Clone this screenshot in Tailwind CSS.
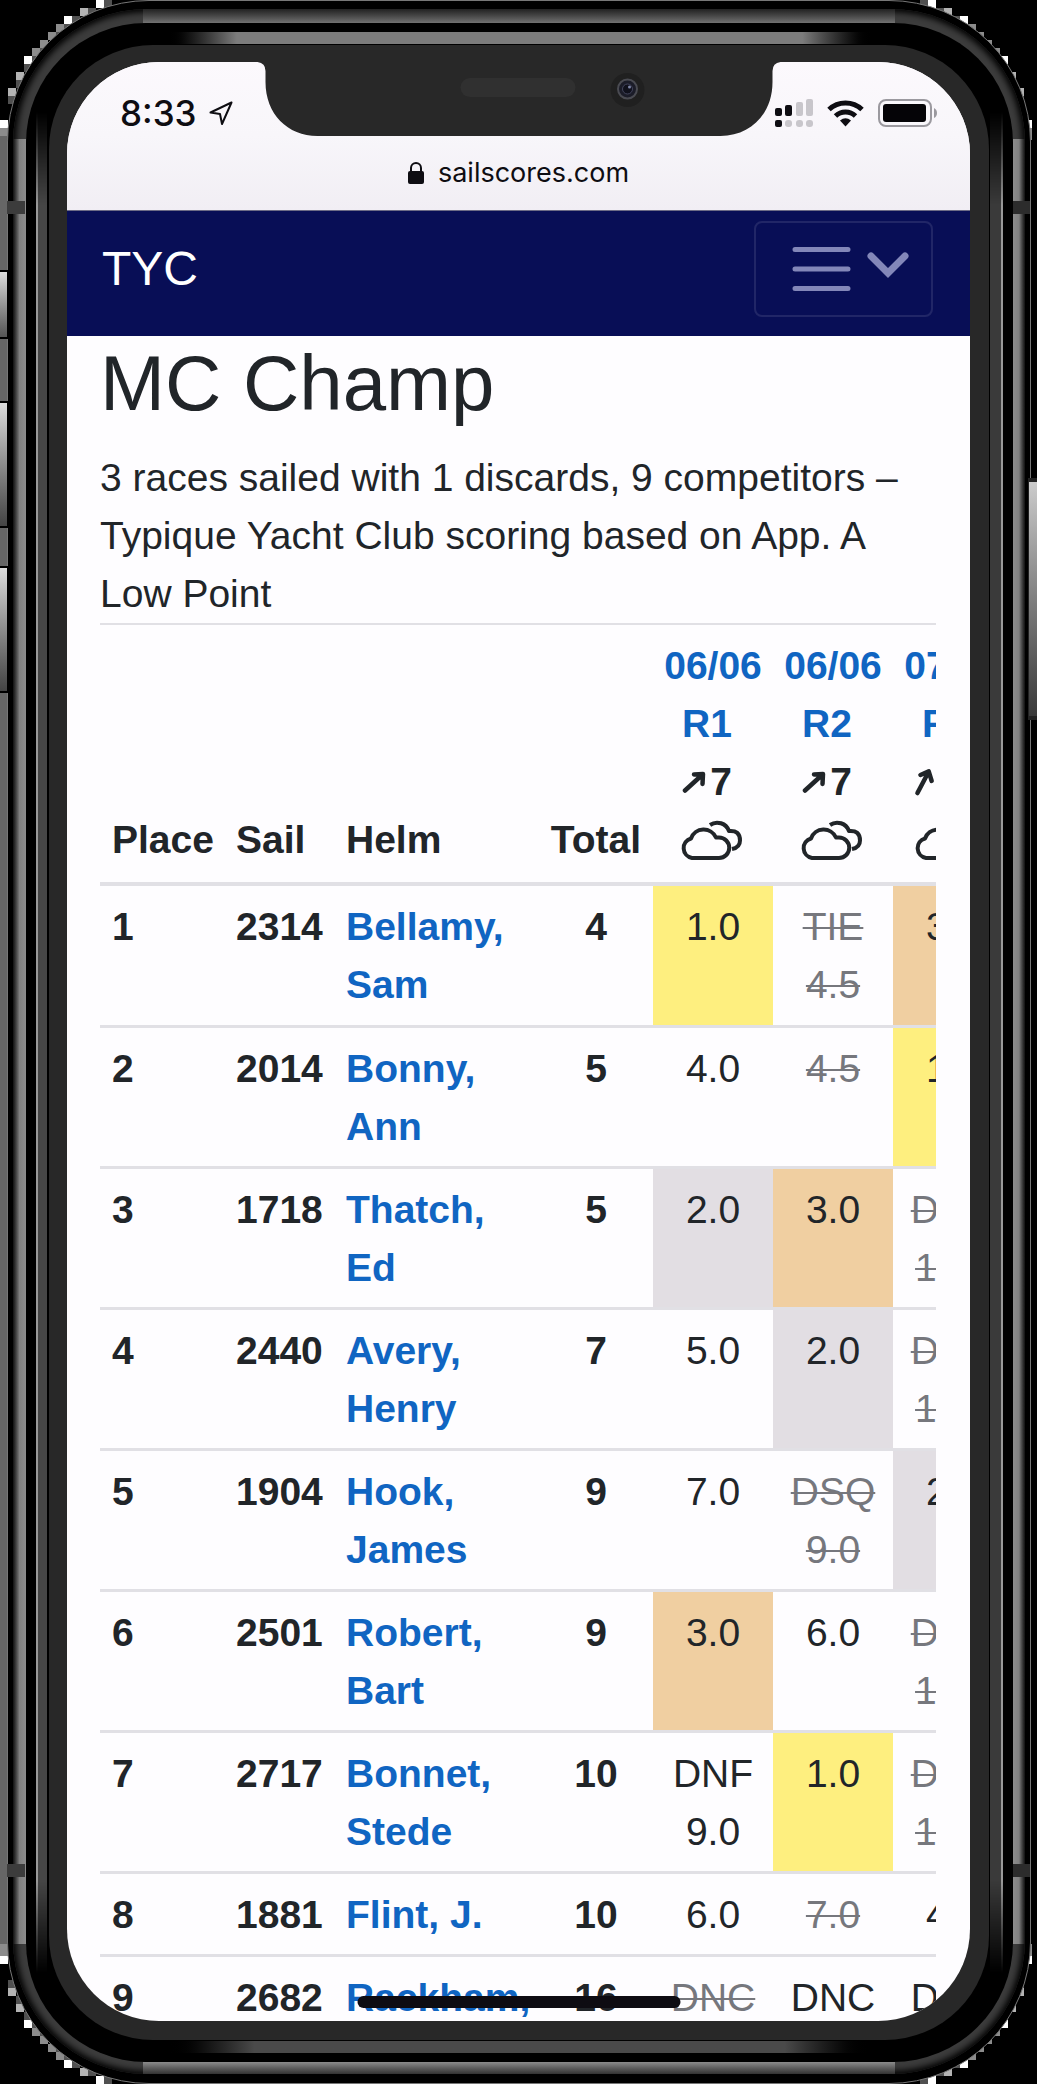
<!DOCTYPE html>
<html lang="en">
<head>
<meta charset="utf-8">
<title>MC Champ – SailScores</title>
<script src="https://cdn.jsdelivr.net/npm/@tailwindcss/browser@4"></script>
</head>
<body class="bg-black">
<svg width="0" height="0" class="absolute" aria-hidden="true">
  <defs>
    <symbol id="cloud" viewBox="0 0 62 42">
      <g fill="none" stroke="#212529" stroke-width="4" stroke-linecap="butt" stroke-linejoin="round">
        <path d="M12 39H39a10 10 0 0 0 0-20.500h-3a13.500 13.500 0 0 0-25 1A10 10 0 0 0 12 39z"/>
        <path d="M30 6a12.500 12.500 0 0 1 19 6q11-1 11 9.500 0 7-8 8.500"/>
      </g>
    </symbol>
    <symbol id="wind" viewBox="0 0 24 24">
      <path d="M3 20.500L20 5M12 4.500L21 4L20.500 14" fill="none" stroke="#212529" stroke-width="4.500" stroke-linecap="round" stroke-linejoin="round"/>
    </symbol>
    <symbol id="steps" viewBox="0 0 112 140">
      <path fill="#fff" d="M96 0h8v8h-8zM64 16h8v8h-8zM24 56h8v8h-8zM0 120h8v8h-8z"/>
      <path fill="#b4b4b4" d="M8 88h8v8h-8zM80 8h8v8h-8zM16 72h8v8h-8z"/>
      <path fill="#8c8c8c" d="M56 24h8v8h-8zM48 32h8v8h-8zM40 40h8v8h-8zM32 48h8v8h-8zM0 128h8v12h-8z"/>
      <path fill="#505050" d="M104 0h8v8h-8zM88 8h8v8h-8zM72 16h8v8h-8zM24 64h8v8h-8zM8 96h8v8h-8zM64 24h8v8h-8zM56 32h8v8h-8zM40 48h8v8h-8zM32 56h8v8h-8zM16 80h8v8h-8z"/>
    </symbol>
  </defs>
</svg>

<div class="relative h-screen overflow-hidden bg-black pl-[7px] pr-[6px]">
  <!-- Backdrop around the handset -->
  <svg class="absolute left-0 top-0" width="112" height="140" aria-hidden="true"><use href="#steps"/></svg>
  <svg class="absolute right-[5px] top-0 -scale-x-100" width="112" height="140" aria-hidden="true"><use href="#steps"/></svg>
  <svg class="absolute bottom-0 left-0 -scale-y-100" width="112" height="140" aria-hidden="true"><use href="#steps"/></svg>
  <svg class="absolute bottom-0 right-[5px] -scale-100" width="112" height="140" aria-hidden="true"><use href="#steps"/></svg>
  <div class="absolute bottom-[140px] left-0 top-[136px] w-[7px] bg-[#666]"></div>

  <!-- Handset frame, from the outside in -->
  <div class="relative h-full rounded-[142px] border border-[#777] bg-black pb-[9px] pl-[5px] pr-[5px] pt-[8px]">
    <div class="relative h-full rounded-[134px] bg-[#3c3c3c] pb-[12px] pl-[13px] pr-[12px] pt-[14px] shadow-[inset_0_0_6px_3px_#000]">
      <div class="absolute inset-x-[130px] top-0 h-[14px] bg-linear-to-b from-[#222] to-[#727272]"></div>
      <div class="absolute inset-x-[130px] bottom-0 h-[12px] bg-linear-to-t from-[#333] to-[#8c8c8c]"></div>
      <div class="absolute inset-y-[130px] left-0 w-[13px] bg-linear-to-r from-[#111] via-[#808080] to-[#8c8c8c]"></div>
      <div class="absolute inset-y-[130px] right-0 w-[12px] bg-linear-to-l from-[#111] via-[#808080] to-[#8c8c8c]"></div>
      <div class="relative h-full rounded-[120px] bg-black px-[10px] py-[9px]">
        <div class="relative h-full rounded-[112px] bg-black py-[13px] pl-[13px] pr-[14px]">
          <div class="absolute left-[130px] right-1/2 top-0 h-3 bg-linear-to-r from-black from-0% via-[#7c7c7c] via-20% to-[#7c7c7c]"></div>
          <div class="absolute left-1/2 right-[130px] top-0 h-3 bg-linear-to-l from-black from-0% via-[#7c7c7c] via-20% to-[#7c7c7c]"></div>
          <div class="absolute bottom-0 left-[130px] right-1/2 h-3 bg-linear-to-r from-black from-0% via-[#4a4a4a] via-25% to-[#4a4a4a]"></div>
          <div class="absolute bottom-0 left-1/2 right-[130px] h-3 bg-linear-to-l from-black from-0% via-[#4a4a4a] via-25% to-[#4a4a4a]"></div>
          <div class="absolute inset-y-[80px] left-0 w-[11px] border-l-2 border-[#999] bg-[#464646] mask-y-from-95%"></div>
          <div class="absolute inset-y-[80px] right-0 w-[13px] border-r-2 border-[#999] bg-[#3a3a3a] mask-y-from-95%"></div>

          <div class="relative h-full rounded-[104px] bg-[#282828] pb-[19px] pl-[18px] pr-[19px] pt-[17px]">
            <!-- Screen -->
            <div class="relative flex h-full flex-col overflow-hidden rounded-[92px] bg-[#fefdff] font-['Liberation_Sans',sans-serif] text-[39px] leading-[58px] text-[#212529]">

              <div class="shrink-0 border-b border-[#6d6c86] bg-linear-to-b from-[#fcf9fd] via-[#f8f6fa] to-[#f1eef4] font-['Inter',sans-serif] text-[#0e0d12]">
                <div class="flex h-[74px] items-center justify-between pl-[53px] pr-[33px] pt-[28px]">
                  <div class="flex items-center gap-[12px]">
                    <span class="text-[35px] font-medium leading-[40px]">8:33</span>
                    <svg width="24" height="25" viewBox="0 0 24 25" fill="none" stroke="#0e0d12" stroke-width="2" stroke-linejoin="round" aria-hidden="true"><path d="M22.500 1.500L1.500 11.500l9.500 1.500 2 10z"/></svg>
                  </div>
                  <div class="flex items-center">
                    <svg class="mr-[14px]" width="38" height="28" aria-hidden="true">
                      <g fill="#0e0d12"><rect x="0" y="9" width="7" height="8" rx="2"/><rect x="10" y="6" width="7" height="11" rx="2"/><rect x="0" y="21" width="7" height="7" rx="2"/></g>
                      <g fill="#c8c6cb"><rect x="21" y="3" width="7" height="14" rx="2"/><rect x="31" y="0" width="7" height="17" rx="2"/><rect x="10" y="21" width="7" height="7" rx="3"/><rect x="21" y="21" width="7" height="7" rx="3"/><rect x="31" y="21" width="7" height="7" rx="3"/></g>
                    </svg>
                    <svg class="mr-[13px]" width="37" height="28" aria-hidden="true">
                      <g fill="none" stroke="#0e0d12" stroke-width="5"><path d="M2 10.500a24 24 0 0 1 33 0"/><path d="M8.500 17a14.500 14.500 0 0 1 20 0"/></g>
                      <path d="M13 21.500q5.500-4.500 11 0l-5.500 6z" fill="#0e0d12"/>
                    </svg>
                    <svg width="60" height="28" aria-hidden="true">
                      <rect x="2" y="1" width="52" height="26" rx="7" fill="none" stroke="#9b999f" stroke-width="2"/>
                      <rect x="6" y="5" width="43" height="18" rx="3" fill="#050407"/>
                      <path d="M57 9q3 1.500 3 5t-3 5z" fill="#9b999f"/>
                    </svg>
                  </div>
                </div>
                <div class="flex h-[74px] items-center justify-center gap-[14px]">
                  <svg width="16" height="24" aria-hidden="true"><rect x="0" y="10" width="16" height="13" rx="2" fill="#0e0d12"/><path d="M3 11V7a5 5 0 0 1 10 0v4" fill="none" stroke="#0e0d12" stroke-width="2"/></svg>
                  <span class="text-[27px] leading-[40px]">sailscores.com</span>
                </div>
              </div>

              <nav class="flex shrink-0 items-center justify-between bg-[#080e56] pb-[19px] pl-[35px] pr-[37px] pt-[10px]">
                <a href="#" class="text-[48px] leading-[72px] text-white">TYC</a>
                <button type="button" aria-label="Toggle navigation" class="flex h-[96px] w-[179px] items-center justify-end gap-[16px] rounded-lg border-2 border-white/10 pr-[22px]">
                  <svg width="60" height="46" stroke="#8387b9" stroke-width="5" stroke-linecap="round" aria-hidden="true"><path d="M4 3.500H57M4 23H57M4 42.500H57"/></svg>
                  <svg class="mb-2" width="42" height="26" fill="none" stroke="#8387b9" stroke-width="7" stroke-linecap="round" aria-hidden="true"><path d="M4 4L21 21L38 4"/></svg>
                </button>
              </nav>

              <main class="min-h-0 grow pl-[33px] pr-[34px]">
                <h1 class="mb-[19px] text-[78px] leading-[94px]">MC Champ</h1>
                <p>3 races sailed with 1 discards, 9 competitors – Typique Yacht Club scoring based on App. A Low Point</p>
                <div class="overflow-hidden">
                  <table class="w-[913px] table-fixed border-separate border-spacing-0 text-center [&_td]:px-3 [&_td]:pb-[11px] [&_td]:pt-3 [&_td]:align-top [&_tbody_th]:px-3 [&_tbody_th]:pb-[11px] [&_tbody_th]:pt-3 [&_tbody_th]:align-top [&_thead_th]:border-b-4 [&_thead_th]:border-t-2 [&_thead_th]:border-[#e1e0e5] [&_thead_th]:pb-[13px] [&_thead_th]:pt-3 [&_thead_th]:align-bottom [&_tbody_tr+tr>*]:border-t-3 [&_tbody_tr+tr>*]:border-[#e1e0e5] [&_tbody_tr+tr>*]:pb-[10px] [&_a]:text-[#1065c2] [&_s]:text-[#76777d] [&_s]:decoration-2">
                    <colgroup><col class="w-[124px]"><col class="w-[110px]"><col class="w-[205px]"><col class="w-[114px]"><col class="w-[120px]"><col class="w-[120px]"><col class="w-[120px]"></colgroup>
                    <thead>
                      <tr>
                        <th scope="col" class="pl-3 text-left">Place</th>
                        <th scope="col" class="pl-3 text-left">Sail</th>
                        <th scope="col" class="pl-3 text-left">Helm</th>
                        <th scope="col">Total</th>
                        <th scope="col"><a href="#">06/06<span class="block pr-3">R1</span></a><div class="flex items-center justify-center gap-1 pr-3"><svg width="24" height="24" aria-hidden="true"><use href="#wind"/></svg>7</div><div class="flex h-[58px] items-center justify-center pr-1"><svg width="62" height="42" aria-hidden="true"><use href="#cloud"/></svg></div></th>
                        <th scope="col"><a href="#">06/06<span class="block pr-3">R2</span></a><div class="flex items-center justify-center gap-1 pr-3"><svg width="24" height="24" aria-hidden="true"><use href="#wind"/></svg>7</div><div class="flex h-[58px] items-center justify-center pr-1"><svg width="62" height="42" aria-hidden="true"><use href="#cloud"/></svg></div></th>
                        <th scope="col"><a href="#">07/06<span class="block pr-3">R3</span></a><div class="flex items-center justify-center gap-1 pr-3"><svg class="-rotate-20" width="24" height="24" aria-hidden="true"><use href="#wind"/></svg>10</div><div class="flex h-[58px] items-center justify-center pr-4"><svg width="62" height="42" aria-hidden="true"><use href="#cloud"/></svg></div></th>
                      </tr>
                    </thead>
                    <tbody>
                      <tr><th class="text-left">1</th><th class="text-left">2314</th><th class="text-left"><a href="#">Bellamy,<br>Sam</a></th><th>4</th><td class="bg-[#feef7f]">1.0</td><td><s>TIE<br>4.5</s></td><td class="bg-[#f0cfa1]">3.0</td></tr>
                      <tr><th class="text-left">2</th><th class="text-left">2014</th><th class="text-left"><a href="#">Bonny,<br>Ann</a></th><th>5</th><td>4.0</td><td><s>4.5</s></td><td class="bg-[#feef7f]">1.0</td></tr>
                      <tr><th class="text-left">3</th><th class="text-left">1718</th><th class="text-left"><a href="#">Thatch,<br>Ed</a></th><th>5</th><td class="bg-[#e2dee3]">2.0</td><td class="bg-[#f0cfa1]">3.0</td><td><s>DNC<br>10.0</s></td></tr>
                      <tr><th class="text-left">4</th><th class="text-left">2440</th><th class="text-left"><a href="#">Avery,<br>Henry</a></th><th>7</th><td>5.0</td><td class="bg-[#e2dee3]">2.0</td><td><s>DNC<br>10.0</s></td></tr>
                      <tr><th class="text-left">5</th><th class="text-left">1904</th><th class="text-left"><a href="#">Hook,<br>James</a></th><th>9</th><td>7.0</td><td><s>DSQ<br>9.0</s></td><td class="bg-[#e2dee3]">2.0</td></tr>
                      <tr><th class="text-left">6</th><th class="text-left">2501</th><th class="text-left"><a href="#">Robert,<br>Bart</a></th><th>9</th><td class="bg-[#f0cfa1]">3.0</td><td>6.0</td><td><s>DNC<br>10.0</s></td></tr>
                      <tr><th class="text-left">7</th><th class="text-left">2717</th><th class="text-left"><a href="#">Bonnet,<br>Stede</a></th><th>10</th><td>DNF<br>9.0</td><td class="bg-[#feef7f]">1.0</td><td><s>DNC<br>10.0</s></td></tr>
                      <tr><th class="text-left">8</th><th class="text-left">1881</th><th class="text-left"><a href="#">Flint, J.</a></th><th>10</th><td>6.0</td><td><s>7.0</s></td><td>4.0</td></tr>
                      <tr><th class="text-left">9</th><th class="text-left">2682</th><th class="text-left"><a href="#">Rackham,</a></th><th>16</th><td><s>DNC</s></td><td>DNC</td><td>DNC</td></tr>
                    </tbody>
                  </table>
                </div>
              </main>

              <!-- Notch with speaker and camera -->
              <svg class="absolute left-1/2 top-0 -translate-x-1/2" width="523" height="75" aria-hidden="true">
                <path fill="#282828" d="M0 0Q8 1 8 9V20C8 52 30 74 60 74H463C493 74 515 52 515 20V9Q515 1 523 0z"/>
                <rect x="203" y="16" width="115" height="19" rx="9.500" fill="#303030"/>
                <circle cx="370" cy="28" r="17" fill="#202020"/>
                <circle cx="370" cy="27" r="9.500" fill="#1b1c28" stroke="#4a4b52" stroke-width="2"/>
                <circle cx="370" cy="27" r="5" fill="#10111c" stroke="#43455c"/>
                <circle cx="372" cy="25" r="1.500" fill="#8087a8"/>
              </svg>
              <!-- Home indicator -->
              <div class="absolute bottom-[13px] left-1/2 h-3 w-[323px] -translate-x-1/2 rounded-full bg-[#0e0c12]"></div>
            </div>
          </div>
        </div>
      </div>
    </div>
  </div>

  <!-- Antenna bands -->
  <div class="absolute left-[7px] top-[201px] h-[13px] w-[18px] bg-[#3c3c3c]"></div>
  <div class="absolute right-[7px] top-[201px] h-[13px] w-[17px] bg-[#2c2c2c]"></div>
  <div class="absolute bottom-[207px] left-[7px] h-[13px] w-[18px] bg-[#3c3c3c]"></div>
  <div class="absolute bottom-[207px] right-[7px] h-[13px] w-[17px] bg-[#2c2c2c]"></div>
  <!-- Side buttons -->
  <div class="absolute left-0 top-[270px] h-[69px] w-[9px] border-y-2 border-r-2 border-black bg-linear-to-b from-[#ddd] to-[#555]"></div>
  <div class="absolute left-0 top-[401px] h-[127px] w-[9px] border-y-2 border-r-2 border-black bg-linear-to-b from-[#ddd] to-[#444]"></div>
  <div class="absolute left-0 top-[566px] h-[127px] w-[9px] border-y-2 border-r-2 border-black bg-linear-to-b from-[#ddd] to-[#444]"></div>
  <div class="absolute right-0 top-[478px] h-[242px] w-[9px] border-y-4 border-l border-[#222] bg-linear-to-b from-[#ccc] to-[#3a3a3a]"></div>
</div>
</body>
</html>
